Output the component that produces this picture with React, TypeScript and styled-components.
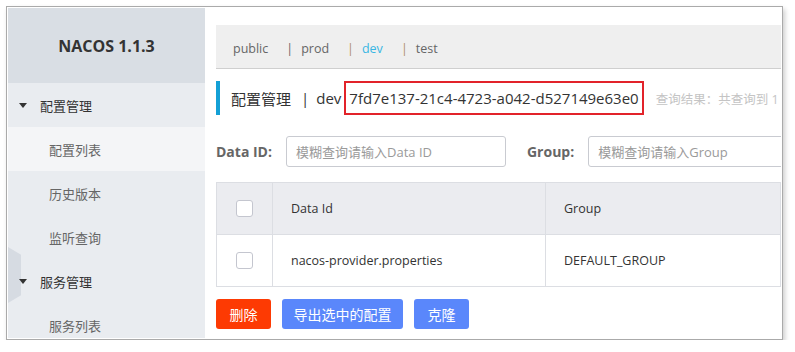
import React from "react";
import styled, { createGlobalStyle } from "styled-components";

const GlobalStyle = createGlobalStyle`
  html, body { margin: 0; padding: 0; background: #fff; }
  body { font-family: "Open Sans", "Noto Sans CJK SC", sans-serif; }
  * { box-sizing: border-box; }
`;

const Frame = styled.div`
  margin: 6px 0 0 6px;
  width: 777px;
  height: 334px;
  border: 1px solid #aaaaaa;
  padding: 1px;
  background: #fff;
  box-shadow: 2px 3px 5px rgba(0, 0, 0, 0.2);
  display: flex;
  overflow: hidden;
`;

const Sidebar = styled.aside`
  width: 197px;
  flex: none;
  background: #e9ecf0;
  position: relative;
  display: flex;
  flex-direction: column;
`;

const SidebarHeader = styled.div`
  height: 75px;
  flex: none;
  background: #d9dee4;
  display: flex;
  align-items: center;
  justify-content: center;
  font-weight: 700;
  font-size: 16px;
  color: #333;
`;

const MenuGroup = styled.div`
  height: 44px;
  flex: none;
  display: flex;
  align-items: center;
  padding-left: 11px;
  font-size: 13px;
  color: #333;
`;

const Arrow = styled.span`
  position: relative;
  z-index: 1;
  width: 0;
  height: 0;
  border-left: 4px solid transparent;
  border-right: 4px solid transparent;
  border-top: 5px solid #333;
  margin-right: 13px;
`;

const SubItem = styled.div<{ $active?: boolean }>`
  height: 44px;
  flex: none;
  display: flex;
  align-items: center;
  padding-left: 41px;
  font-size: 13px;
  color: #666;
  background: ${(p) => (p.$active ? "#f4f5f7" : "transparent")};
`;

const Toggle = styled.div`
  position: absolute;
  left: 0;
  top: 239px;
  width: 13px;
  height: 56px;
  background: #d6dbe2;
  clip-path: polygon(0 0, 100% 14%, 100% 86%, 0 100%);
`;

const Main = styled.main`
  flex: 1;
  min-width: 0;
  padding: 17px 0 0 11px;
  overflow: hidden;
  background: #fff;
`;

const NamespaceBar = styled.div`
  height: 44px;
  background: #efefef;
  border-bottom: 1px solid #cfcfcf;
  display: flex;
  align-items: center;
  padding: 3px 0 0 17px;
  font-size: 12.5px;
  color: #666;
  white-space: nowrap;
`;

const NsItem = styled.span<{ $active?: boolean }>`
  color: ${(p) => (p.$active ? "#39b6e3" : "#666")};
`;

const NsSep = styled.span<{ $tint?: boolean }>`
  margin: 0 8px 0 18px;
  color: ${(p) => (p.$tint ? "#b0906c" : "#666")};
`;

const TitleRow = styled.div`
  margin-top: 12px;
  height: 34px;
  display: flex;
  align-items: center;
  border-left: 4px solid #14a0d6;
  padding-left: 11px;
  font-size: 15px;
  color: #333;
  white-space: nowrap;
`;

const TitleSep = styled.span`
  margin: 0 7px 0 10px;
`;

const IdBox = styled.span`
  flex: none;
  height: 34px;
  display: flex;
  align-items: center;
  border: 2px solid #e2232a;
  padding: 0 3px 0 3px;
  margin-left: 3px;
`;

const ResultText = styled.span`
  flex: none;
  margin-left: 12px;
  font-size: 12.5px;
  color: #c4c4c4;
`;

const FilterRow = styled.div`
  margin-top: 21px;
  height: 31px;
  display: flex;
  align-items: center;
  white-space: nowrap;
`;

const FilterLabel = styled.label<{ $gapLeft?: number }>`
  flex: none;
  font-weight: 700;
  font-size: 14px;
  color: #666;
  margin-left: ${(p) => p.$gapLeft ?? 0}px;
  margin-right: 14px;
`;

const SearchInput = styled.input`
  flex: none;
  width: 220px;
  height: 31px;
  border: 1px solid #c9cbd1;
  border-radius: 3px;
  padding: 0 0 0 9px;
  font-family: inherit;
  font-size: 13px;
  color: #333;
  outline: none;
  &::placeholder {
    color: #9a9a9a;
  }
`;

const Table = styled.div`
  margin-top: 15px;
  display: grid;
  grid-template-columns: 56px 273px 1fr;
  border-left: 1px solid #dcdee3;
  border-top: 1px solid #dcdee3;
`;

const Cell = styled.div<{ $head?: boolean; $center?: boolean }>`
  height: 52px;
  display: flex;
  align-items: center;
  justify-content: ${(p) => (p.$center ? "center" : "flex-start")};
  padding-left: ${(p) => (p.$center ? 0 : 18)}px;
  background: ${(p) => (p.$head ? "#ebecf0" : "#fff")};
  border-right: 1px solid #dcdee3;
  border-bottom: 1px solid #dcdee3;
  font-size: 12.5px;
  color: #333;
  white-space: nowrap;
`;

const Checkbox = styled.span`
  width: 17px;
  height: 17px;
  border: 1px solid #c4c6cf;
  border-radius: 3px;
  background: #fff;
`;

const ButtonRow = styled.div`
  margin-top: 12px;
  display: flex;
  gap: 11px;
`;

const Button = styled.button<{ $danger?: boolean }>`
  min-width: 55px;
  height: 30px;
  padding: 0 11.5px;
  border: none;
  border-radius: 3px;
  font-family: inherit;
  font-size: 14px;
  color: #fff;
  background: ${(p) => (p.$danger ? "#fd3a03" : "#5a87fb")};
`;

export default function App() {
  return (
    <>
      <GlobalStyle />
      <Frame>
        <Sidebar>
          <SidebarHeader>NACOS 1.1.3</SidebarHeader>
          <MenuGroup>
            <Arrow />
            配置管理
          </MenuGroup>
          <SubItem $active>配置列表</SubItem>
          <SubItem>历史版本</SubItem>
          <SubItem>监听查询</SubItem>
          <MenuGroup>
            <Arrow />
            服务管理
          </MenuGroup>
          <SubItem>服务列表</SubItem>
          <Toggle />
        </Sidebar>
        <Main>
          <NamespaceBar>
            <NsItem>public</NsItem>
            <NsSep>|</NsSep>
            <NsItem>prod</NsItem>
            <NsSep $tint>|</NsSep>
            <NsItem $active>dev</NsItem>
            <NsSep $tint>|</NsSep>
            <NsItem>test</NsItem>
          </NamespaceBar>
          <TitleRow>
            配置管理<TitleSep>|</TitleSep>dev
            <IdBox>7fd7e137-21c4-4723-a042-d527149e63e0</IdBox>
            <ResultText>查询结果：共查询到 1</ResultText>
          </TitleRow>
          <FilterRow>
            <FilterLabel>Data ID:</FilterLabel>
            <SearchInput placeholder="模糊查询请输入Data ID" />
            <FilterLabel $gapLeft={21}>Group:</FilterLabel>
            <SearchInput placeholder="模糊查询请输入Group" />
          </FilterRow>
          <Table>
            <Cell $head $center>
              <Checkbox />
            </Cell>
            <Cell $head>Data Id</Cell>
            <Cell $head>Group</Cell>
            <Cell $center>
              <Checkbox />
            </Cell>
            <Cell>nacos-provider.properties</Cell>
            <Cell>DEFAULT_GROUP</Cell>
          </Table>
          <ButtonRow>
            <Button $danger>删除</Button>
            <Button>导出选中的配置</Button>
            <Button>克隆</Button>
          </ButtonRow>
        </Main>
      </Frame>
    </>
  );
}
